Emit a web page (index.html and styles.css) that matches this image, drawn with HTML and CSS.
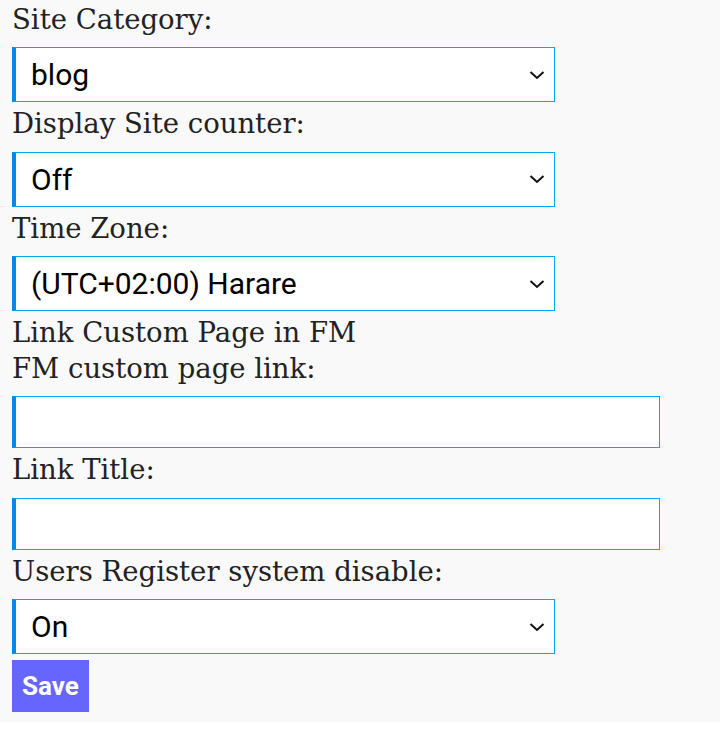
FILE: index.html
```html
<!DOCTYPE html>
<html lang="en">
<head>
    <meta charset="UTF-8">
    <meta name="viewport" content="width=device-width, initial-scale=1.0">
    <title>Site Settings</title>
    <link rel="stylesheet" href="styles.css">
</head>
<body>
    <div class="page">
        <form class="settings" onsubmit="return false;">
            <label class="field-label" for="options">Options:</label>

            <label class="field-label" for="category">Site Category:</label>
            <select id="category" class="field-select">
                <option selected>blog</option>
                <option>forum</option>
                <option>news</option>
            </select>

            <label class="field-label" for="counter">Display Site counter:</label>
            <select id="counter" class="field-select">
                <option selected>Off</option>
                <option>On</option>
            </select>

            <label class="field-label" for="timezone">Time Zone:</label>
            <select id="timezone" class="field-select">
                <option>(UTC+01:00) Lagos</option>
                <option selected>(UTC+02:00) Harare</option>
                <option>(UTC+03:00) Nairobi</option>
            </select>

            <div class="field-label">Link Custom Page in FM</div>
            <label class="field-label" for="fmLink">FM custom page link:</label>
            <input type="text" id="fmLink" class="field-input">

            <label class="field-label" for="fmTitle">Link Title:</label>
            <input type="text" id="fmTitle" class="field-input">

            <label class="field-label" for="register">Users Register system disable:</label>
            <select id="register" class="field-select">
                <option selected>On</option>
                <option>Off</option>
            </select>

            <button type="submit" class="save-btn">Save</button>
        </form>
    </div>
</body>
</html>
```

FILE: styles.css
```css
body {
    margin: 0;
    background-color: #ffffff;
    font-family: "DejaVu Serif", serif;
    color: #222;
}
.page {
    background-color: #f9f9f9;
    padding: 0 12px 10px 12px;
    margin-top: -34px;
}
.settings {
    display: flex;
    flex-direction: column;
    align-items: flex-start;
}
.field-label {
    display: block;
    font-size: 27.5px;
    line-height: 35.5px;
}
.field-select,
.field-input {
    box-sizing: border-box;
    margin: 10px 0 4px 0;
    border: 1px solid #00a8f0;
    border-left: 4px solid #0a86e6;
    border-radius: 0;
    background-color: #fff;
    color: #000;
    font-family: Roboto, sans-serif;
    font-size: 30px;
    outline: none;
}
.field-select {
    width: 543px;
    height: 55px;
    padding: 0 40px 0 15px;
    -webkit-appearance: none;
    appearance: none;
    background-image: url("data:image/svg+xml,%3Csvg xmlns='http://www.w3.org/2000/svg' width='16' height='10' viewBox='0 0 16 10'%3E%3Cpath d='M1.5 2 L8 8 L14.5 2' fill='none' stroke='%23111' stroke-width='2'/%3E%3C/svg%3E");
    background-repeat: no-repeat;
    background-position: right 9px center;
}
.field-input {
    width: 648px;
    height: 52px;
    padding: 0 16px;
}
.save-btn {
    margin-top: 2px;
    padding: 0 10px;
    height: 52px;
    background-color: #6666ff;
    color: #fff;
    border: none;
    font-family: Roboto, sans-serif;
    font-weight: bold;
    font-size: 26px;
    cursor: pointer;
}
```
